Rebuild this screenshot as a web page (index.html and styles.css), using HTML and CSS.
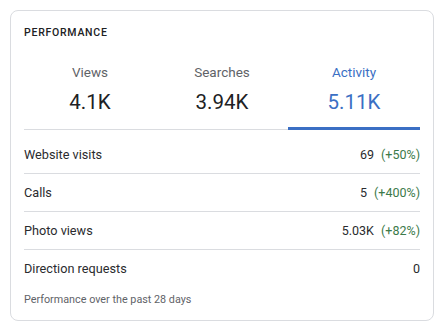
FILE: index.html
```html
<!DOCTYPE html>
<html lang="en">
<head>
    <meta charset="UTF-8">
    <meta name="viewport" content="width=device-width, initial-scale=1.0">
    <title>Performance</title>
    <link rel="stylesheet" href="styles.css">
</head>
<body>
    <div class="card">
        <h2 class="title">PERFORMANCE</h2>

        <div class="tabs">
            <div class="tab">
                <div class="tab-label">Views</div>
                <div class="tab-value">4.1K</div>
            </div>
            <div class="tab">
                <div class="tab-label">Searches</div>
                <div class="tab-value">3.94K</div>
            </div>
            <div class="tab active">
                <div class="tab-label">Activity</div>
                <div class="tab-value">5.11K</div>
            </div>
        </div>

        <div class="rows">
            <div class="row">
                <span>Website visits</span>
                <span class="val">69 <em>(+50%)</em></span>
            </div>
            <div class="row">
                <span>Calls</span>
                <span class="val">5 <em>(+400%)</em></span>
            </div>
            <div class="row">
                <span>Photo views</span>
                <span class="val">5.03K <em>(+82%)</em></span>
            </div>
            <div class="row">
                <span>Direction requests</span>
                <span class="val">0</span>
            </div>
        </div>

        <p class="note">Performance over the past 28 days</p>
    </div>
</body>
</html>
```

FILE: styles.css
```css
body {
    margin: 0;
    padding: 10px;
    background: #fff;
    font-family: Roboto, "Liberation Sans", Arial, sans-serif;
    color: #202124;
}
.card {
    width: 396px;
    height: 309px;
    padding: 0 13px;
    border: 1px solid #dadce0;
    border-radius: 8px;
}
.title {
    margin: 0;
    padding-top: 15px;
    font-size: 10.5px;
    font-weight: 500;
    letter-spacing: 0.75px;
    line-height: 13px;
}
.tabs {
    display: grid;
    grid-template-columns: 1fr 1fr 1fr;
    margin-top: 25px;
    border-bottom: 1px solid #dadce0;
}
.tab {
    text-align: center;
    height: 65px;
    box-sizing: border-box;
}
.tab-label {
    font-size: 13.5px;
    color: #5f6368;
    line-height: 16px;
}
.tab-value {
    font-size: 20.5px;
    line-height: 24px;
    margin-top: 10px;
}
.tab.active {
    border-bottom: 3px solid #3b6fc4;
    margin-bottom: -1px;
    height: 66px;
}
.tab.active .tab-label,
.tab.active .tab-value {
    color: #3b6fc4;
}
.rows {
    margin-top: 6px;
}
.row {
    display: flex;
    justify-content: space-between;
    align-items: center;
    height: 37px;
    font-size: 12.7px;
    color: #2a2b2e;
    border-bottom: 1px solid #dadce0;
}
.row:last-child {
    border-bottom: none;
}
.val {
    font-size: 12.5px;
}
.val em {
    font-style: normal;
    color: #3c7a4a;
    margin-left: 4px;
}
.note {
    margin: 6px 0 0;
    font-size: 10.8px;
    line-height: 13px;
    color: #5f6368;
}
```
